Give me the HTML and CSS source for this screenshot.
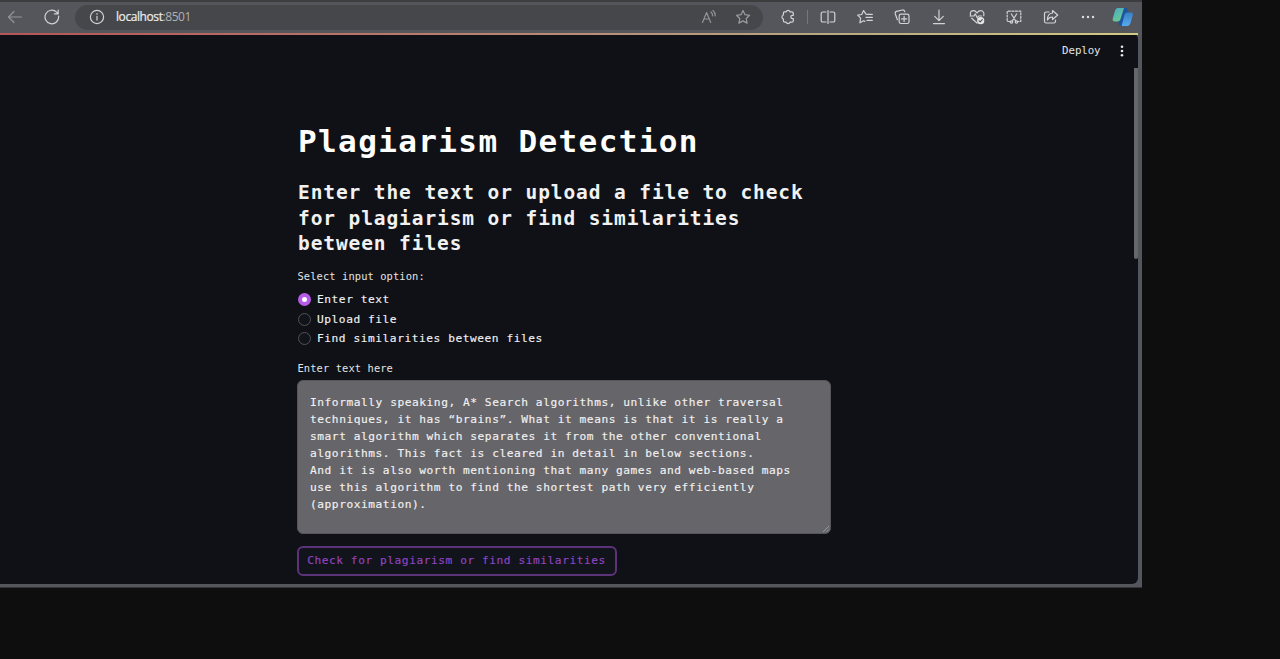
FILE: index.html
```html
<!DOCTYPE html>
<html lang="en">
<head>
<meta charset="utf-8">
<title>Plagiarism Detection</title>
<link rel="stylesheet" href="styles.css">
</head>
<body>
<div class="window">
  <header class="toolbar">
    <svg class="icon back" viewBox="0 0 16 16"><path d="M14.5 8H1.5M7 2.5 1.5 8 7 13.5"/></svg>
    <svg class="icon reload" viewBox="0 0 16 16"><path d="M14.6 7.2a6.8 6.8 0 1 1-2-4.1L14 4.5M14.2 1v3.8h-3.8"/></svg>
    <div class="address">
      <svg class="icon info" viewBox="0 0 16 16"><circle cx="8" cy="8" r="6.6"/><path d="M8 7.3v3.8M8 4.6v.6"/></svg>
      <span class="url"><b>localhost</b>:8501</span>
      <svg class="icon read" viewBox="0 0 16 16"><path d="m1.5 13.5 4.1-10 4.1 10M3.2 10h4.8M10 3q1.6 1.3 1.6 3.8M12 1.5q2.4 2 2.2 5.5"/></svg>
      <svg class="icon star" viewBox="0 0 16 16"><path d="m8 1.5 2 4.2 4.6.6-3.4 3.2.9 4.6L8 11.9l-4.1 2.2.9-4.6L1.4 6.3 6 5.7z"/></svg>
    </div>
    <div class="tools">
      <svg class="icon" viewBox="0 0 16 16"><path d="M4.4 2.8h1.8a2 2 0 0 1 3.8 0h1.8q1.5 0 1.5 1.5v2h-.8a1.7 1.7 0 0 0 0 3.4h.8v2q0 1.5-1.5 1.5H10a2 2 0 0 1-3.8 0H4.9q-1.5 0-1.5-1.5V10a2.1 2.1 0 0 1 0-4V4.3q0-1.5 1-1.5z"/></svg>
      <i class="divider"></i>
      <svg class="icon" viewBox="0 0 16 16"><path d="M6 3H2.8Q1.2 3 1.2 4.6v6.8Q1.2 13 2.8 13H6M10 3h3.2q1.6 0 1.6 1.6v6.8q0 1.6-1.6 1.6H10M8 1.5v13"/></svg>
      <svg class="icon" viewBox="0 0 16 16"><path d="M9 5.2 6.6 1.6 4.7 5.5.7 6.1l2.9 3-.7 4.7 3.7-2 1.2.6M10 5.4h5.3M9 8.4h6.3M10 11.4h5.3"/></svg>
      <svg class="icon" viewBox="0 0 16 16"><rect x="5.2" y="5.2" width="9.8" height="9.3" rx="1.8"/><path d="M10.1 7.3v5.2M7.5 9.9h5.2M3.4 10.8 1.3 5q-.6-2 1.2-2.6l6-1.4q1.6-.3 2.3 1.7"/></svg>
      <svg class="icon" viewBox="0 0 16 16"><path d="M8 1v10.5M3.7 7.4 8 11.6l4.3-4.2M2.5 14.6h11"/></svg>
      <svg class="icon" viewBox="0 0 16 16"><path d="M1.5 6C.8 3 2.4 1.7 4.5 1.7 6.2 1.7 7 2.6 8 3.8c1-1.2 1.8-2.1 3.5-2.1 2.8 0 4 2.4 3.2 5M1 7h4l1.3-2.1L8.4 9l1.2-2h3M2.7 9.2 8 14"/><circle class="solid" cx="11.7" cy="11.7" r="3.6"/><path class="check" d="m10 11.8 1.2 1.1 2.1-2.2"/></svg>
      <svg class="icon" viewBox="0 0 16 16"><path stroke-dasharray="2 1.5" d="M3.7 12.5H1.2V2.2h13.6v10.3h-2.5"/><path d="m5.4 5 4.3 7M10.6 5l-4.3 7"/><circle cx="5.5" cy="13" r="1.2"/><circle cx="10.5" cy="13" r="1.2"/></svg>
      <svg class="icon" viewBox="0 0 16 16"><path d="M6 3H3.3Q1.5 3 1.5 4.8v7.4q0 1.8 1.8 1.8h7.4q1.8 0 1.8-1.8v-1M9.5 1.5 14.7 6l-5.2 4.5V8Q6 8 4.4 11 4.4 4.5 9.5 4z"/></svg>
      <svg class="icon dots" viewBox="0 0 16 16"><circle cx="3" cy="8" r="1.2"/><circle cx="8" cy="8" r="1.2"/><circle cx="13" cy="8" r="1.2"/></svg>
      <svg class="copilot" viewBox="0 0 22 20">
        <defs>
          <linearGradient id="green" x2=".5" y2="1"><stop stop-color="#49a9c8"/><stop offset="1" stop-color="#69c991"/></linearGradient>
          <linearGradient id="blue" x2="0" y2="1"><stop stop-color="#397fc4"/><stop offset="1" stop-color="#58a9ef"/></linearGradient>
        </defs>
        <path fill="#1b559d" d="M10 1h3.5q2 0 2.4 2l.8 2.5-5 13.5H9q-2 0-2.2-2l-.6-2.5z"/>
        <path fill="url(#green)" d="M5.5 1H12L8.4 12.5q-.7 2-2.7 2H3Q0 14.5.8 11.5l2.3-8Q3.8 1 5.5 1z"/>
        <path fill="url(#blue)" d="M15.2 5.5h3.8q2.5 0 1.8 2.6l-2.4 8.5q-.7 2.4-3 2.4H9.6l3-11.4q.6-2.1 2.6-2.1z"/>
      </svg>
    </div>
  </header>
  <main class="app">
    <div class="appbar"><span>Deploy</span><svg class="kebab" viewBox="0 0 4 12"><circle cx="2" cy="1.7" r="1.3"/><circle cx="2" cy="6" r="1.3"/><circle cx="2" cy="10.3" r="1.3"/></svg></div>
    <div class="scrollbar"></div>
    <section class="content">
      <h1>Plagiarism Detection</h1>
      <h2>Enter the text or upload a file to check<br>for plagiarism or find similarities<br>between files</h2>
      <p class="label">Select input option:</p>
      <div class="options">
        <div class="option"><i class="radio checked"></i>Enter text</div>
        <div class="option"><i class="radio"></i>Upload file</div>
        <div class="option"><i class="radio"></i>Find similarities between files</div>
      </div>
      <p class="label">Enter text here</p>
      <div class="textarea">Informally speaking, A* Search algorithms, unlike other traversal<br>techniques, it has “brains”. What it means is that it is really a<br>smart algorithm which separates it from the other conventional<br>algorithms. This fact is cleared in detail in below sections.<br>And it is also worth mentioning that many games and web-based maps<br>use this algorithm to find the shortest path very efficiently<br>(approximation).<svg class="grip" viewBox="0 0 8 8"><path d="M1 7 7 1M4.5 7 7 4.5"/></svg></div>
      <button class="check-button">Check for plagiarism or find similarities</button>
    </section>
  </main>
</div>
</body>
</html>
```

FILE: styles.css
```css
* { box-sizing: border-box; }
body { margin: 0; height: 659px; overflow: hidden; background: #0e0e0e; font-family: "DejaVu Sans Mono", monospace; }
.window { width: 1142px; height: 588px; padding: 0 4px 4px 0; background: #55565b; border-top: 2px solid #3d3d40; border-bottom: 1px solid #353538; }
.toolbar { display: flex; align-items: center; width: 1138px; height: 31px; padding: 0 0 1px 7px; }
.icon { display: block; flex: none; width: 16px; height: 16px; fill: none; stroke: #d2d3d5; stroke-width: 1.2; stroke-linecap: round; stroke-linejoin: round; }
.back { stroke: #929397; }
.reload { margin-left: 21px; }
.address { display: flex; align-items: center; width: 688px; height: 25px; margin-left: 15px; padding: 0 12px 0 14px; border-radius: 13px; background: #46474a; }
.url { margin-left: 11px; color: #b0b1b3; font: 12px/24px "Open Sans", sans-serif; letter-spacing: -.42px; }
.url b { color: #ececed; font-weight: 500; -webkit-text-stroke: .2px #ececed; }
.read { margin-left: auto; stroke: #929396; }
.star { margin-left: 18px; stroke: #9b9c9f; }
.tools { display: flex; flex: none; align-items: center; gap: 21.1px; margin-left: 17px; }
.divider { width: 1px; height: 14px; margin: 0 -9px 0 -10px; background: #76777b; }
.solid { fill: #e5e5e5; stroke: none; }
.check { stroke: #55565b; }
.dots { fill: #dedede; stroke: none; }
.copilot { width: 22px; height: 20px; margin-left: -5px; }
.app { position: relative; width: 1138px; height: 551px; border-top: 2px solid; border-image: linear-gradient(90deg, #b65457, #b9796c 35%, #b7a582 70%, #d1ca82) 1; background: #0f1116; border-radius: 0 6px 6px 0; }
.appbar { display: flex; justify-content: flex-end; align-items: center; height: 32px; padding-right: 14.5px; color: #e3e3e4; font-size: 10.8px; line-height: 14px; letter-spacing: -.1px; }
.appbar span { margin-bottom: 1px; }
.kebab { width: 4px; height: 12px; margin-left: 19px; fill: #e7e7e8; }
.scrollbar { position: absolute; top: 33px; right: 0; width: 4px; height: 191px; background: #66676b; border-radius: 0 0 3px 3px; }
.content { width: 534px; margin-left: 297px; padding-top: 54px; color: #f1f1f2; }
h1, h2, p { margin: 0; }
h1 { padding-left: 1px; font-size: 31px; line-height: 40px; letter-spacing: 1.38px; color: #fff; white-space: nowrap; }
h2 { margin-top: 19px; padding-left: 1px; font-size: 19.5px; line-height: 25.7px; letter-spacing: .9px; white-space: nowrap; }
.label { height: 16px; margin-top: 11px; padding-left: .5px; color: #e4e4e5; font-size: 10.4px; line-height: 16px; letter-spacing: .11px; }
.options { margin: 6px 0 12px; }
.option { display: flex; align-items: center; height: 19.4px; gap: 6px; padding-left: 1px; font-size: 11.2px; letter-spacing: .55px; -webkit-text-stroke: .15px; }
.radio { width: 13px; height: 13px; border: 1px solid #505156; border-radius: 50%; background: #12141c; }
.radio.checked { border: 4px solid #b65be8; background: #fff; }
.textarea { position: relative; height: 154px; margin-top: 4px; padding: 13px 12px; border: 1px solid #55555a; border-radius: 6px; background: #66656a; color: #f1f1f1; font-size: 11.2px; line-height: 17px; letter-spacing: .55px; white-space: nowrap; -webkit-text-stroke: .15px; }
.grip { position: absolute; right: 0; bottom: 0; width: 8px; height: 8px; fill: none; stroke: #a6a6a9; stroke-width: .8; }
.check-button { display: block; width: 320px; height: 30px; margin-top: 12px; padding: 0 1px 1px 0; border: 2px solid #5c3279; border-radius: 6px; background: #12141c; color: #9144c0; font: 11.2px "DejaVu Sans Mono", monospace; letter-spacing: .55px; white-space: nowrap; -webkit-text-stroke: .15px; }
```
